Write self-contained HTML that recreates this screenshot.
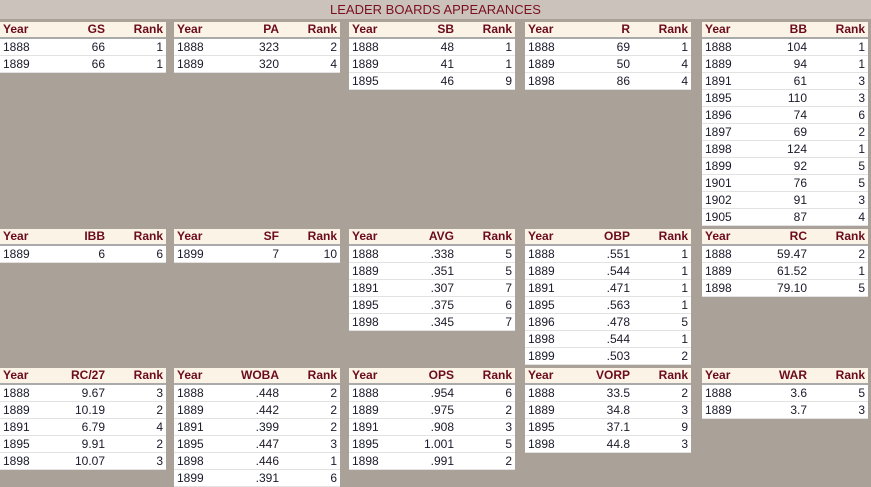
<!DOCTYPE html>
<html><head><meta charset="utf-8"><style>
*{margin:0;padding:0;box-sizing:border-box}
body{width:871px;height:487px;background:#aaa299;position:relative;overflow:hidden;font-family:"Liberation Sans",Arial,sans-serif;font-size:12px}
.title{position:absolute;left:0;top:0;width:871px;height:19px;background:#cbc3bb;color:#7a0f1f;text-align:center;font-size:13px;line-height:19px}
table{position:absolute;width:166px;border-collapse:collapse;background:#fff}
th{background:#fbf3e5;color:#6b0b1b;font-weight:bold;height:16px;line-height:15px;border-bottom:2px solid #aaa;padding:0 3px}
td{height:17px;line-height:16px;border-bottom:1px solid #e2e2e2;color:#1a1a2a;padding:0 3px}
th:first-child,td:first-child{text-align:left;width:60px}
th:nth-child(2),td:nth-child(2){text-align:right;width:48px}
th:nth-child(3),td:nth-child(3){text-align:right}
</style></head><body>
<div class="title">LEADER BOARDS APPEARANCES</div>

<table style="left:0;top:22px"><tr><th>Year</th><th>GS</th><th>Rank</th></tr>
<tr><td>1888</td><td>66</td><td>1</td></tr><tr><td>1889</td><td>66</td><td>1</td></tr></table>

<table style="left:174px;top:22px"><tr><th>Year</th><th>PA</th><th>Rank</th></tr>
<tr><td>1888</td><td>323</td><td>2</td></tr><tr><td>1889</td><td>320</td><td>4</td></tr></table>

<table style="left:349px;top:22px"><tr><th>Year</th><th>SB</th><th>Rank</th></tr>
<tr><td>1888</td><td>48</td><td>1</td></tr><tr><td>1889</td><td>41</td><td>1</td></tr><tr><td>1895</td><td>46</td><td>9</td></tr></table>

<table style="left:525px;top:22px"><tr><th>Year</th><th>R</th><th>Rank</th></tr>
<tr><td>1888</td><td>69</td><td>1</td></tr><tr><td>1889</td><td>50</td><td>4</td></tr><tr><td>1898</td><td>86</td><td>4</td></tr></table>

<table style="left:702px;top:22px"><tr><th>Year</th><th>BB</th><th>Rank</th></tr>
<tr><td>1888</td><td>104</td><td>1</td></tr><tr><td>1889</td><td>94</td><td>1</td></tr><tr><td>1891</td><td>61</td><td>3</td></tr><tr><td>1895</td><td>110</td><td>3</td></tr><tr><td>1896</td><td>74</td><td>6</td></tr><tr><td>1897</td><td>69</td><td>2</td></tr><tr><td>1898</td><td>124</td><td>1</td></tr><tr><td>1899</td><td>92</td><td>5</td></tr><tr><td>1901</td><td>76</td><td>5</td></tr><tr><td>1902</td><td>91</td><td>3</td></tr><tr><td>1905</td><td>87</td><td>4</td></tr></table>

<table style="left:0;top:229px"><tr><th>Year</th><th>IBB</th><th>Rank</th></tr>
<tr><td>1889</td><td>6</td><td>6</td></tr></table>

<table style="left:174px;top:229px"><tr><th>Year</th><th>SF</th><th>Rank</th></tr>
<tr><td>1899</td><td>7</td><td>10</td></tr></table>

<table style="left:349px;top:229px"><tr><th>Year</th><th>AVG</th><th>Rank</th></tr>
<tr><td>1888</td><td>.338</td><td>5</td></tr><tr><td>1889</td><td>.351</td><td>5</td></tr><tr><td>1891</td><td>.307</td><td>7</td></tr><tr><td>1895</td><td>.375</td><td>6</td></tr><tr><td>1898</td><td>.345</td><td>7</td></tr></table>

<table style="left:525px;top:229px"><tr><th>Year</th><th>OBP</th><th>Rank</th></tr>
<tr><td>1888</td><td>.551</td><td>1</td></tr><tr><td>1889</td><td>.544</td><td>1</td></tr><tr><td>1891</td><td>.471</td><td>1</td></tr><tr><td>1895</td><td>.563</td><td>1</td></tr><tr><td>1896</td><td>.478</td><td>5</td></tr><tr><td>1898</td><td>.544</td><td>1</td></tr><tr><td>1899</td><td>.503</td><td>2</td></tr></table>

<table style="left:702px;top:229px"><tr><th>Year</th><th>RC</th><th>Rank</th></tr>
<tr><td>1888</td><td>59.47</td><td>2</td></tr><tr><td>1889</td><td>61.52</td><td>1</td></tr><tr><td>1898</td><td>79.10</td><td>5</td></tr></table>

<table style="left:0;top:368px"><tr><th>Year</th><th>RC/27</th><th>Rank</th></tr>
<tr><td>1888</td><td>9.67</td><td>3</td></tr><tr><td>1889</td><td>10.19</td><td>2</td></tr><tr><td>1891</td><td>6.79</td><td>4</td></tr><tr><td>1895</td><td>9.91</td><td>2</td></tr><tr><td>1898</td><td>10.07</td><td>3</td></tr></table>

<table style="left:174px;top:368px"><tr><th>Year</th><th>WOBA</th><th>Rank</th></tr>
<tr><td>1888</td><td>.448</td><td>2</td></tr><tr><td>1889</td><td>.442</td><td>2</td></tr><tr><td>1891</td><td>.399</td><td>2</td></tr><tr><td>1895</td><td>.447</td><td>3</td></tr><tr><td>1898</td><td>.446</td><td>1</td></tr><tr><td>1899</td><td>.391</td><td>6</td></tr></table>

<table style="left:349px;top:368px"><tr><th>Year</th><th>OPS</th><th>Rank</th></tr>
<tr><td>1888</td><td>.954</td><td>6</td></tr><tr><td>1889</td><td>.975</td><td>2</td></tr><tr><td>1891</td><td>.908</td><td>3</td></tr><tr><td>1895</td><td>1.001</td><td>5</td></tr><tr><td>1898</td><td>.991</td><td>2</td></tr></table>

<table style="left:525px;top:368px"><tr><th>Year</th><th>VORP</th><th>Rank</th></tr>
<tr><td>1888</td><td>33.5</td><td>2</td></tr><tr><td>1889</td><td>34.8</td><td>3</td></tr><tr><td>1895</td><td>37.1</td><td>9</td></tr><tr><td>1898</td><td>44.8</td><td>3</td></tr></table>

<table style="left:702px;top:368px"><tr><th>Year</th><th>WAR</th><th>Rank</th></tr>
<tr><td>1888</td><td>3.6</td><td>5</td></tr><tr><td>1889</td><td>3.7</td><td>3</td></tr></table>
</body></html>
